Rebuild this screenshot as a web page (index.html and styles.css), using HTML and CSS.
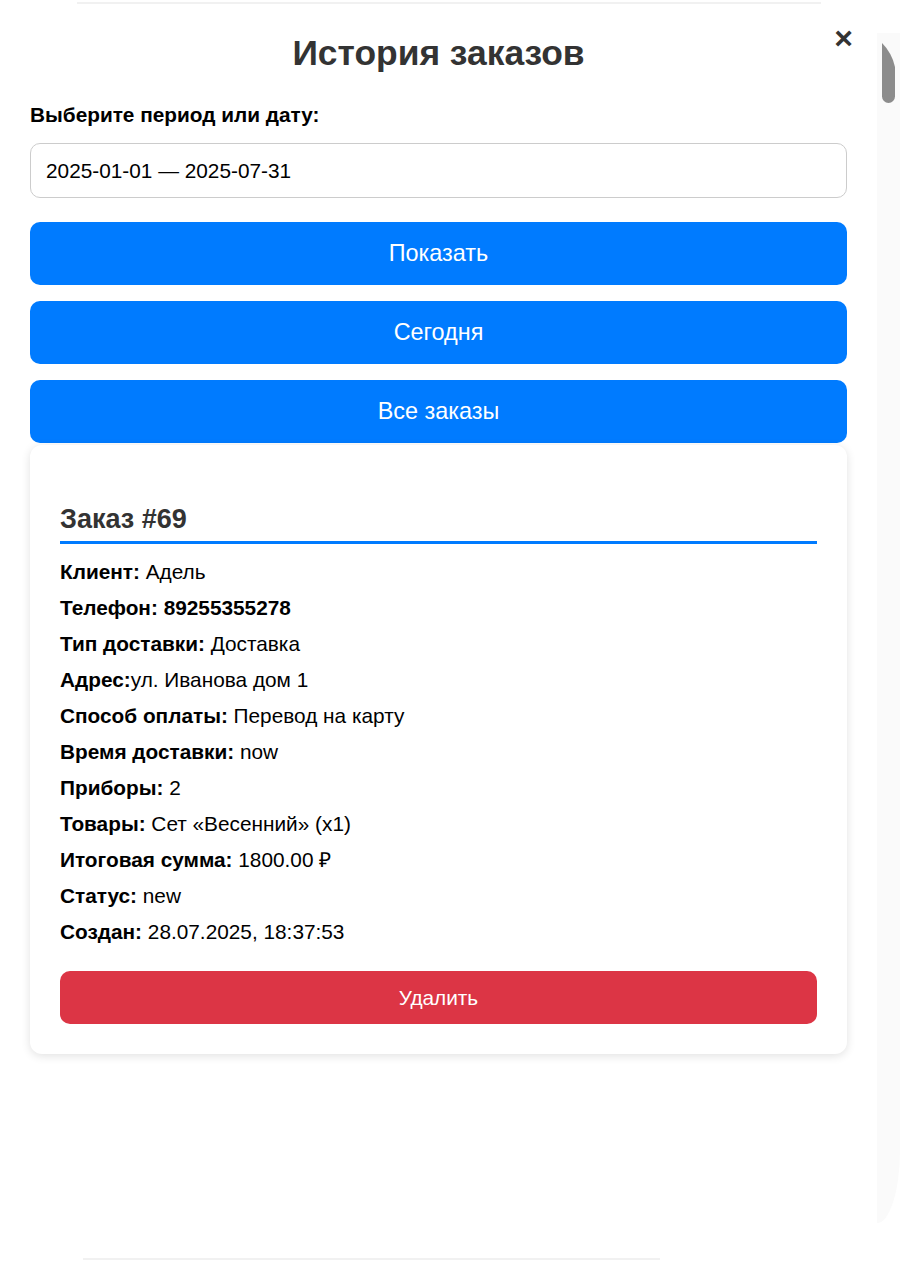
FILE: index.html
```html
<!DOCTYPE html>
<html lang="ru">
<head>
<meta charset="utf-8">
<title>История заказов</title>
<link rel="stylesheet" href="styles.css">
</head>
<body>
<div class="page">
  <div class="topline"></div>
  <div class="frame">
    <div class="modal">
      <button class="close" type="button">&times;</button>
      <h2 class="title">История заказов</h2>
      <label class="label">Выберите период или дату:</label>
      <div class="input">2025-01-01 — 2025-07-31</div>
      <div class="actions">
        <button class="btn" type="button">Показать</button>
        <button class="btn" type="button">Сегодня</button>
        <button class="btn" type="button">Все заказы</button>
      </div>
      <div class="card">
        <h3 class="order-title">Заказ #69</h3>
        <div class="rows">
          <p><b>Клиент:</b> Адель</p>
          <p><b>Телефон: 89255355278</b></p>
          <p><b>Тип доставки:</b> Доставка</p>
          <p><b>Адрес:</b>ул. Иванова дом 1</p>
          <p><b>Способ оплаты:</b> Перевод на карту</p>
          <p><b>Время доставки:</b> now</p>
          <p><b>Приборы:</b> 2</p>
          <p><b>Товары:</b> Сет «Весенний» (x1)</p>
          <p><b>Итоговая сумма:</b> 1800.00 ₽</p>
          <p><b>Статус:</b> new</p>
          <p><b>Создан:</b> 28.07.2025, 18:37:53</p>
        </div>
        <button class="btn-delete" type="button">Удалить</button>
      </div>
    </div>
    <div class="track">
      <svg class="thumb" width="23" height="60" viewBox="0 0 23 60">
        <path d="M5,0 Q15,10 18,24 L18,53.5 A6.5,6.5 0 0 1 5,53.5 Z" fill="#8c8c8c"/>
      </svg>
    </div>
  </div>
  <div class="bottomline"></div>
</div>
</body>
</html>
```
FILE: styles.css
```css
html, body {
  margin: 0;
  padding: 0;
  background: #ffffff;
}

body {
  font-family: "Liberation Sans", Arial, sans-serif;
  color: #000;
  width: 900px;
  height: 1261px;
  overflow: hidden;
}

.page {
  display: flex;
  flex-direction: column;
  width: 900px;
}

.topline {
  margin-top: 2px;
  margin-left: 77px;
  width: 744px;
  height: 2px;
  background: #f1f1f1;
}

.frame {
  display: flex;
  height: 1254px;
}

.modal {
  position: relative;
  width: 877px;
  box-sizing: border-box;
  padding: 30px 30px 0 30px;
  display: flex;
  flex-direction: column;
}

.close {
  position: absolute;
  top: 17px;
  right: 24px;
  border: none;
  background: none;
  padding: 0;
  font-family: "Liberation Sans", Arial, sans-serif;
  font-weight: bold;
  font-size: 32px;
  line-height: 34px;
  color: #333;
  cursor: pointer;
}

.title {
  margin: 0;
  text-align: center;
  font-size: 35.4px;
  font-weight: bold;
  color: #333;
  line-height: 38px;
}

.label {
  display: block;
  margin-top: 31px;
  font-size: 20.8px;
  font-weight: bold;
  line-height: 24px;
}

.input {
  margin-top: 16px;
  border: 1px solid #cccccc;
  border-radius: 10px;
  padding: 15px 15px;
  font-size: 20.8px;
  line-height: 23px;
}

.actions {
  display: flex;
  flex-direction: column;
  gap: 16px;
  margin-top: 24px;
}

.btn {
  display: block;
  width: 100%;
  height: 63px;
  border: none;
  border-radius: 10px;
  background: #007bff;
  color: #fff;
  font-family: "Liberation Sans", Arial, sans-serif;
  font-size: 23.4px;
  cursor: pointer;
}

.card {
  margin-top: 2px;
  background: #fff;
  border-radius: 12px;
  box-shadow: 0 2px 10px rgba(0, 0, 0, 0.12);
  padding: 30px;
}

.order-title {
  margin: 29px 0 0 0;
  font-size: 27px;
  line-height: 31px;
  font-weight: bold;
  color: #333;
  padding-bottom: 6px;
  border-bottom: 3px solid #007bff;
}

.rows {
  display: flex;
  flex-direction: column;
  gap: 12px;
  margin-top: 16px;
}

.rows p {
  margin: 0;
  font-size: 20.8px;
  line-height: 24px;
}

.btn-delete {
  display: block;
  width: 100%;
  height: 53px;
  margin-top: 27px;
  border: none;
  border-radius: 10px;
  background: #dc3545;
  color: #fff;
  font-family: "Liberation Sans", Arial, sans-serif;
  font-size: 20.8px;
  cursor: pointer;
}

.track {
  width: 23px;
  margin-top: 29px;
  height: 1190px;
  background: #fafafa;
  border-radius: 0 0 23px 0 / 0 0 73px 0;
}

.thumb {
  display: block;
  margin-top: 10px;
}

.bottomline {
  margin-left: 83px;
  width: 577px;
  height: 2px;
  background: #f1f1f1;
}
```
